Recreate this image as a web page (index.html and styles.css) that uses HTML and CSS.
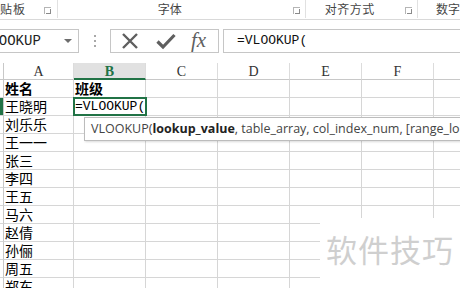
FILE: index.html
```html
<!DOCTYPE html>
<html>
<head>
<meta charset="utf-8">
<link rel="stylesheet" href="styles.css">
</head>
<body>
<div class="app">
  <div class="ribbon">
    <div class="group g-clip"><span class="glabel">贴板</span><span class="launch"></span></div>
    <div class="group g-font"><span class="glabel center">字体</span><span class="launch"></span></div>
    <div class="group g-align"><span class="glabel center">对齐方式</span><span class="launch"></span></div>
    <div class="group g-num"><span class="glabel">数字</span></div>
  </div>
  <div class="fbar">
    <div class="namebox"><span class="nametext">VLOOKUP</span><span class="drop"></span></div>
    <div class="dots"><i></i><i></i><i></i></div>
    <div class="btns">
      <svg class="ico" width="18" height="18" viewBox="0 0 18 18"><path d="M2 2 L16 16 M16 2 L2 16" stroke="#5f5f5f" stroke-width="2.4" fill="none"/></svg>
      <svg class="ico" width="20" height="18" viewBox="0 0 20 18"><path d="M1.5 9.5 L7 15 L18.5 3" stroke="#5f5f5f" stroke-width="3.2" fill="none"/></svg>
      <span class="fx">fx</span>
    </div>
    <div class="formula">=VLOOKUP(</div>
  </div>
  <div class="sheet">
    <div class="grid">
      <div class="rh hd"></div><div class="ch">A</div><div class="ch sel">B</div><div class="ch">C</div><div class="ch">D</div><div class="ch">E</div><div class="ch">F</div><div class="ch last"></div>
      <div class="rh"></div><div class="c b">姓名</div><div class="c b">班级</div><div class="c"></div><div class="c"></div><div class="c"></div><div class="c"></div><div class="c last"></div>
      <div class="rh on"></div><div class="c">王晓明</div><div class="c active">=VLOOKUP(</div><div class="c"></div><div class="c"></div><div class="c"></div><div class="c"></div><div class="c last"></div>
      <div class="rh"></div><div class="c">刘乐乐</div><div class="c"></div><div class="c"></div><div class="c"></div><div class="c"></div><div class="c"></div><div class="c last"></div>
      <div class="rh"></div><div class="c">王一一</div><div class="c"></div><div class="c"></div><div class="c"></div><div class="c"></div><div class="c"></div><div class="c last"></div>
      <div class="rh"></div><div class="c">张三</div><div class="c"></div><div class="c"></div><div class="c"></div><div class="c"></div><div class="c"></div><div class="c last"></div>
      <div class="rh"></div><div class="c">李四</div><div class="c"></div><div class="c"></div><div class="c"></div><div class="c"></div><div class="c"></div><div class="c last"></div>
      <div class="rh"></div><div class="c">王五</div><div class="c"></div><div class="c"></div><div class="c"></div><div class="c"></div><div class="c"></div><div class="c last"></div>
      <div class="rh"></div><div class="c">马六</div><div class="c"></div><div class="c"></div><div class="c"></div><div class="c"></div><div class="c"></div><div class="c last"></div>
      <div class="rh"></div><div class="c">赵倩</div><div class="c"></div><div class="c"></div><div class="c"></div><div class="c"></div><div class="c"></div><div class="c last"></div>
      <div class="rh"></div><div class="c">孙俪</div><div class="c"></div><div class="c"></div><div class="c"></div><div class="c"></div><div class="c"></div><div class="c last"></div>
      <div class="rh"></div><div class="c">周五</div><div class="c"></div><div class="c"></div><div class="c"></div><div class="c"></div><div class="c"></div><div class="c last"></div>
      <div class="rh"></div><div class="c">郑东</div><div class="c"></div><div class="c"></div><div class="c"></div><div class="c"></div><div class="c"></div><div class="c last"></div>
    </div>
    <div class="tip">VLOOKUP(<b>lookup_value</b>, table_array, col_index_num, [range_lookup])</div>
    <div class="wm">软件技巧</div>
  </div>
</div>
</body>
</html>
```
FILE: styles.css
```css
* { box-sizing: border-box; }
html, body { margin: 0; padding: 0; background: #fff; }
body { width: 460px; height: 288px; overflow: hidden; font-family: "Noto Sans CJK SC", sans-serif; }
.app { position: relative; width: 460px; height: 288px; overflow: hidden; }

.ribbon { display: flex; height: 20px; border-bottom: 1px solid #d9d9d9; }
.group { position: relative; height: 18px; display: flex; align-items: center; border-right: 1px solid #e1e1e1; white-space: nowrap; }
.g-clip { width: 59px; }
.g-font { width: 251px; }
.g-align { width: 113px; }
.g-num { border-right: none; flex: 1; padding-left: 18px; overflow: visible; }
.glabel { font-size: 12px; color: #454545; line-height: 18px; white-space: nowrap; }
.g-clip .glabel { margin-left: 0; letter-spacing: 1px; }
.center { flex: 1; text-align: center; }
.g-font .glabel { padding-right: 24px; }
.g-align .glabel { padding-right: 24px; padding-left: 0; letter-spacing: 0.5px; }
.launch { position: absolute; right: 5px; top: 7px; width: 7px; height: 7px; border-left: 1px solid #b5b5b5; border-top: 1px solid #b5b5b5; }
.launch::after { content: ""; position: absolute; right: 0; bottom: 0; width: 4px; height: 4px; border-right: 1px solid #8a8a8a; border-bottom: 1px solid #8a8a8a; }
.g-clip .launch { right: 6px; }

.fbar { display: flex; align-items: stretch; height: 24px; margin-top: 9px; }
.namebox { position: relative; width: 79px; border: 1px solid #c6c6c6; border-left: none; overflow: hidden; }
.nametext { position: absolute; left: -18px; top: 3px; font-family: "Liberation Mono", monospace; font-size: 14px; color: #222; line-height: 16px; }
.drop { position: absolute; right: 6px; top: 9px; width: 0; height: 0; border-left: 4px solid transparent; border-right: 4px solid transparent; border-top: 4px solid #6d6d6d; }
.dots { width: 31px; display: flex; flex-direction: column; align-items: center; justify-content: center; gap: 3px; }
.dots i { display: block; width: 2px; height: 2px; background: #a8a8a8; }
.btns { width: 109px; border: 1px solid #c6c6c6; display: flex; align-items: center; padding-left: 10px; gap: 0; }
.btns .ico:first-child { margin-right: 17px; }
.btns .ico:nth-child(2) { margin-right: 15px; }
.fx { font-family: "Liberation Serif", serif; font-style: italic; font-size: 21px; color: #5f5f5f; line-height: 20px; margin-top: -2px; }
.formula { flex: 1; margin-left: 4px; border: 1px solid #c6c6c6; border-right: none; font-family: "Liberation Mono", monospace; font-size: 13px; color: #111; padding-left: 13px; line-height: 22px; }

.sheet { position: relative; margin-top: 10px; }
.grid { display: grid; grid-template-columns: 4px 70px repeat(5, 72px) 1fr; grid-auto-rows: 18px; grid-template-rows: 17px; }
.ch, .c, .rh { border-right: 1px solid #d6d6d6; border-bottom: 1px solid #d6d6d6; }
.ch { font-family: "Liberation Serif", serif; font-size: 14px; color: #333; text-align: center; line-height: 17px; border-right-color: #dcdcdc; border-bottom-color: #c8c8c8; }
.ch.sel { background: #e1e1e1; color: #217346; font-weight: bold; border-bottom: 2px solid #217346; }
.rh { border-right-color: #c8c8c8; }
.rh.hd { border-bottom-color: #c8c8c8; }
.rh.on { background: #217346; }
.last { border-right: none; }
.c { font-size: 14px; color: #000; line-height: 17px; padding-left: 1px; white-space: nowrap; overflow: visible; }
.c.b { font-weight: bold; }
.c.active { position: relative; z-index: 2; font-family: "Liberation Mono", monospace; font-size: 13px; line-height: 14px; padding-top: 1px; border: 2px solid #217346; margin: -1px 0 0 -1px; width: 74px; height: 19px; padding-left: 0; }

.tip { position: absolute; left: 84px; top: 54px; height: 24px; padding: 0 0 0 6px; background: #fff; border: 1px solid #bcbcbc; box-shadow: 1px 1px 2px rgba(0,0,0,0.15); font-family: "Open Sans", sans-serif; font-size: 12.5px; color: #444; line-height: 22px; white-space: nowrap; z-index: 3; }
.tip b { font-weight: bold; color: #222; }
.wm { position: absolute; left: 320px; top: 155px; width: 140px; height: 80px; background: #fff; font-size: 31px; color: #cfcfcf; padding: 14px 0 0 6px; letter-spacing: 1px; line-height: 34px; z-index: 4; }
```
